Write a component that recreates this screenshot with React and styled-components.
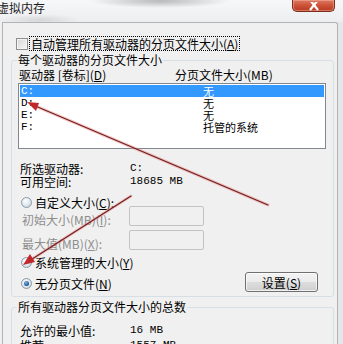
import React from 'react';
import styled, { createGlobalStyle } from 'styled-components';

const GlobalStyle = createGlobalStyle`
  html, body {
    margin: 0;
    padding: 0;
    background: #f0f0f0;
  }
`;

const Window = styled.div`
  position: relative;
  width: 343px;
  height: 344px;
  overflow: hidden;
  background: linear-gradient(90deg, #eef0f2 0%, #e4e7ea 100%);
  font-family: "Noto Sans CJK SC", "Noto Sans", sans-serif;
  font-size: 12px;
  color: #000;
`;

const TitleBar = styled.div`
  height: 22px;
  display: flex;
  align-items: flex-start;
  justify-content: space-between;
  background:
    radial-gradient(ellipse 70px 7px at 160px 1px, rgba(110, 110, 110, 0.45), transparent),
    radial-gradient(ellipse 40px 6px at 40px 20px, rgba(160, 160, 160, 0.3), transparent),
    linear-gradient(180deg, #f6f7f8 0%, #eceef0 100%);
`;

const Title = styled.div`
  margin: 1px 0 0 -3px;
  font-size: 12px;
  line-height: 14px;
  color: #1a1a1a;
`;

const CloseButton = styled.div`
  width: 43px;
  height: 12px;
  margin-right: 8px;
  box-sizing: border-box;
  display: flex;
  justify-content: center;
  align-items: flex-end;
  border: 1px solid #7d2b1c;
  border-top: none;
  border-radius: 0 0 5px 5px;
  background: linear-gradient(180deg, #dc7a63 0%, #cc5238 50%, #b63a22 100%);
  box-shadow: inset 0 0 0 1px rgba(255, 190, 170, 0.45);
`;

const Client = styled.div`
  margin: 0 5px 0 2px;
  height: 322px;
  box-sizing: border-box;
  padding: 13px 3px 0 8px;
  border: 1px solid #b3b3b3;
  border-bottom: none;
  border-radius: 0 3px 0 0;
  background: #f0f0f0;
`;

const CheckRow = styled.div`
  height: 15px;
  margin-left: 5px;
  display: flex;
  align-items: center;
  gap: 2px;
`;

const CheckBox = styled.div`
  width: 12px;
  height: 12px;
  box-sizing: border-box;
  border: 1px solid #8e8f8f;
  background: linear-gradient(135deg, #d6d6d6 0%, #f7f7f7 100%);
  box-shadow: inset 0 0 0 1px #f4f4f4;
`;

const FocusLabel = styled.span`
  line-height: 13px;
  padding: 0 1px;
  outline: 1px dotted #000;
`;

const Key = styled.span`
  text-decoration: underline;
`;

const GroupBox = styled.fieldset`
  margin: ${p => p.$mt}px 0 0;
  padding: ${p => p.$pt}px 7px 0 5px;
  height: ${p => p.$h}px;
  box-sizing: border-box;
  min-width: 0;
  border: 1px solid #d5dfe5;
  border-radius: 3px;
`;

const Legend = styled.legend`
  padding: 0 1px;
  line-height: 14px;
`;

const HeaderRow = styled.div`
  display: grid;
  grid-template-columns: 156px 1fr;
  padding-left: 2px;
  line-height: 13px;
`;

const ListBox = styled.div`
  margin: 2px 0 0 1px;
  width: 308px;
  height: 66px;
  box-sizing: border-box;
  padding: 1px;
  border: 1px solid #828790;
  background: #fff;
`;

const ListRow = styled.div`
  display: grid;
  grid-template-columns: 182px 1fr;
  align-items: center;
  height: 12px;
  line-height: 12px;
  font-size: 11px;
  padding-left: 1px;
  background: ${p => (p.$selected ? '#3399ff' : 'transparent')};
  color: ${p => (p.$selected ? '#fff' : '#000')};
`;

const Mono = styled.span`
  font-family: "Liberation Mono", monospace;
  font-size: 11px;
`;

const InfoGrid = styled.div`
  margin-top: ${p => p.$mt}px;
  padding-left: 3px;
  display: grid;
  grid-template-columns: 110px 1fr;
  grid-auto-rows: ${p => p.$row}px;
  line-height: 13px;
`;

const RadioRow = styled.div`
  height: 13px;
  margin: ${p => p.$mt || 0}px 0 ${p => p.$mb || 0}px 4px;
  display: flex;
  align-items: center;
  gap: 3px;
  line-height: 13px;
`;

const Radio = styled.div`
  width: 11px;
  height: 11px;
  box-sizing: border-box;
  border-radius: 50%;
  border: 1px solid #8a9aa8;
  background: radial-gradient(circle at 40% 35%, #ffffff 0%, #dde6ee 55%, #b9c8d6 100%);
  display: flex;
  align-items: center;
  justify-content: center;

  &::after {
    content: '';
    display: ${p => (p.$checked ? 'block' : 'none')};
    width: 5px;
    height: 5px;
    border-radius: 50%;
    background: radial-gradient(circle at 40% 35%, #7fb6e6 0%, #1d4f8a 70%, #123866 100%);
  }
`;

const SizeRow = styled.div`
  margin-top: ${p => p.$mt}px;
  padding-left: 5px;
  display: grid;
  grid-template-columns: 107px 75px;
  align-items: end;
  height: 20px;
`;

const DimLabel = styled.span`
  color: #8d8d8d;
  line-height: 13px;
`;

const TextBox = styled.div`
  height: 20px;
  box-sizing: border-box;
  border: 1px solid #c3c3c3;
  border-radius: 2px;
  background: #f0f0f0;
`;

const LastRow = styled.div`
  margin-top: 3px;
  height: 20px;
  display: flex;
  justify-content: space-between;
  align-items: flex-end;
`;

const Button = styled.div`
  width: 73px;
  height: 20px;
  margin-right: 8px;
  box-sizing: border-box;
  display: flex;
  align-items: center;
  justify-content: center;
  border: 1px solid #707070;
  border-radius: 3px;
  background: linear-gradient(180deg, #f3f3f3 0%, #ebebeb 48%, #dddddd 52%, #cfcfcf 100%);
  box-shadow: inset 0 0 0 1px rgba(255, 255, 255, 0.7);
  line-height: 13px;
`;

const Overlay = styled.svg`
  position: absolute;
  left: 0;
  top: 0;
  pointer-events: none;
`;

const drives = [
  { drive: 'C:', size: '无', selected: true },
  { drive: 'D:', size: '无' },
  { drive: 'E:', size: '无' },
  { drive: 'F:', size: '托管的系统' },
];

const App = () => (
  <>
    <GlobalStyle />
    <Window>
      <TitleBar>
        <Title>虚拟内存</Title>
        <CloseButton>
          <svg width="12" height="9" viewBox="0 0 12 9">
            <path d="M2 -2 L10 8 M10 -2 L2 8" stroke="#fff" strokeWidth="2.2" />
          </svg>
        </CloseButton>
      </TitleBar>

      <Client>
        <CheckRow>
          <CheckBox />
          <FocusLabel>自动管理所有驱动器的分页文件大小(<Key>A</Key>)</FocusLabel>
        </CheckRow>

        <GroupBox $mt={2} $pt={1} $h={244}>
          <Legend>每个驱动器的分页文件大小</Legend>
          <HeaderRow>
            <span>驱动器 [卷标](<Key>D</Key>)</span>
            <span>分页文件大小(MB)</span>
          </HeaderRow>
          <ListBox>
            {drives.map(d => (
              <ListRow key={d.drive} $selected={d.selected}>
                <Mono>{d.drive}</Mono>
                <span>{d.size}</span>
              </ListRow>
            ))}
          </ListBox>

          <InfoGrid $mt={13} $row={13}>
            <span>所选驱动器:</span>
            <Mono>C:</Mono>
            <span>可用空间:</span>
            <Mono>18685 MB</Mono>
          </InfoGrid>

          <RadioRow $mt={8}>
            <Radio />
            <span>自定义大小(<Key>C</Key>):</span>
          </RadioRow>
          <SizeRow $mt={-3}>
            <DimLabel>初始大小(MB)(<Key>I</Key>):</DimLabel>
            <TextBox />
          </SizeRow>
          <SizeRow $mt={4}>
            <DimLabel>最大值(MB)(<Key>X</Key>):</DimLabel>
            <TextBox />
          </SizeRow>

          <RadioRow $mt={6}>
            <Radio />
            <span>系统管理的大小(<Key>Y</Key>)</span>
          </RadioRow>
          <LastRow>
            <RadioRow $mb={2}>
              <Radio $checked />
              <span>无分页文件(<Key>N</Key>)</span>
            </RadioRow>
            <Button>设置(<Key>S</Key>)</Button>
          </LastRow>
        </GroupBox>

        <GroupBox $mt={3} $pt={10} $h={80}>
          <Legend>所有驱动器分页文件大小的总数</Legend>
          <InfoGrid $mt={0} $row={15}>
            <span>允许的最小值:</span>
            <Mono>16 MB</Mono>
            <span>推荐:</span>
            <Mono>1557 MB</Mono>
          </InfoGrid>
        </GroupBox>
      </Client>

      <Overlay width="343" height="344" viewBox="0 0 343 344">
        <g fill="none" strokeLinecap="round">
          <path d="M268 205 L33 105" stroke="rgba(235,130,130,0.45)" strokeWidth="3" />
          <path d="M268 205 L33 105" stroke="#6e1c1c" strokeWidth="1.1" />
          <path d="M131 196 L29 261" stroke="rgba(235,130,130,0.45)" strokeWidth="3" />
          <path d="M131 196 L29 261" stroke="#6e1c1c" strokeWidth="1.1" />
        </g>
        <polygon points="27,102 36,111 39,103" fill="#c0282a" />
        <polygon points="23,265 35,262 30,254" fill="#c0282a" />
      </Overlay>
    </Window>
  </>
);

export default App;
